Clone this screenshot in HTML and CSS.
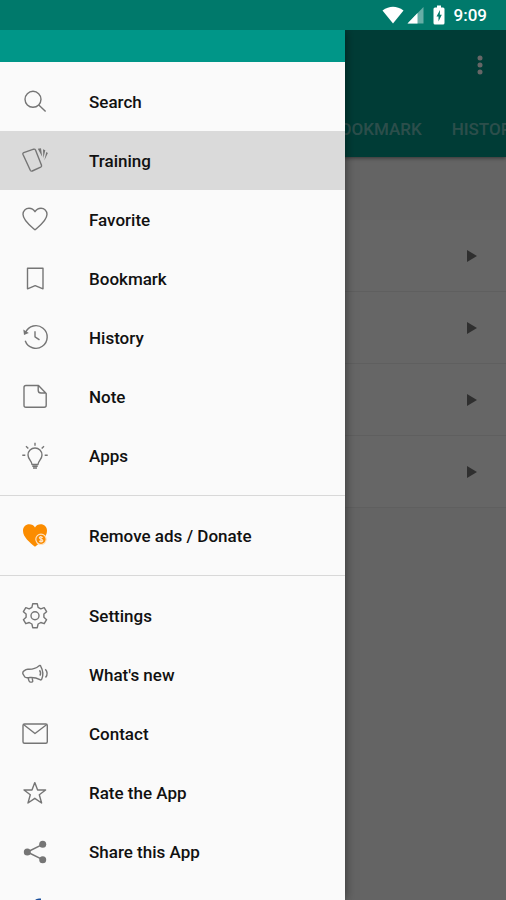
FILE: index.html
```html
<!DOCTYPE html>
<html lang="en">
<head>
<meta charset="utf-8">
<meta name="viewport" content="width=device-width, initial-scale=1">
<title>Menu</title>
<link rel="stylesheet" href="styles.css">
</head>
<body>
<div class="screen">
  <header class="status">
    <svg class="wifi" viewBox="0 0 22 18"><path d="M11 17.500 0.500 4.500Q11-3 21.500 4.500Z"/></svg>
    <svg class="signal" viewBox="0 0 17 18"><path class="faint" d="M16.500 1V17.500H.5Z"/><path d="M10.500 7V17.500H.5Z"/></svg>
    <svg class="battery" viewBox="0 0 12 20"><path d="M4 .5h4v2h2q1.500 0 1.500 1.500v14q0 1.500-1.500 1.500H2Q.5 19.500.5 18V4Q.5 2.500 2 2.500h2Z"/><path class="bolt" d="M7 5 3.500 11.500H5.500V16.500L8.800 9.800H6.800Z"/></svg>
    <span class="clock">9:09</span>
  </header>

  <div class="stage">
    <main class="page">
      <div class="appbar">
        <div class="toolbar">
          <button class="more" aria-label="More options"><svg viewBox="0 0 6 20"><circle cx="3" cy="3" r="2.500"/><circle cx="3" cy="10" r="2.500"/><circle cx="3" cy="17" r="2.500"/></svg></button>
        </div>
        <nav class="tabs"><a href="#bookmark">BOOKMARK</a><a href="#history">HISTORY</a></nav>
      </div>
      <div class="section"></div>
      <ul class="list">
        <li><svg viewBox="0 0 10 12"><path d="M0 0 10 6 0 12Z"/></svg></li>
        <li><svg viewBox="0 0 10 12"><path d="M0 0 10 6 0 12Z"/></svg></li>
        <li><svg viewBox="0 0 10 12"><path d="M0 0 10 6 0 12Z"/></svg></li>
        <li><svg viewBox="0 0 10 12"><path d="M0 0 10 6 0 12Z"/></svg></li>
      </ul>
    </main>
    <div class="scrim"></div>

    <aside class="drawer">
      <div class="drawer-head"></div>
      <nav class="menu">
        <div class="group">
          <a class="item" href="#search"><svg viewBox="0 0 29 29"><circle cx="12" cy="12.300" r="8"/><path d="M17.800 18 24.600 24.600"/></svg>Search</a>
          <a class="item active" href="#training"><svg viewBox="0 0 29 29"><path d="M2.700 6.600 12.700 3.200Q14 2.900 14.500 4L20.500 19.200Q20.900 20.500 19.700 21.200L11.200 25Q9.900 25.400 9.300 24.200L1.900 8.300Q1.500 7.100 2.700 6.600Z"/><path class="solid" d="M16.800 2.800 20 2.300 21.200 10.800ZM22 3.300 24.300 4.200 22.300 12.300ZM25.300 6 26.900 6.900 23.300 14.500Z"/></svg>Training</a>
          <a class="item" href="#favorite"><svg viewBox="0 0 29 29"><path d="M14 24.800C10 21.300 2 15.700 2 9.300 2 5.700 4.700 3.200 8 3.200c2.600 0 4.700 1.300 6 3.500 1.300-2.200 3.400-3.500 6-3.500 3.300 0 6 2.500 6 6.100 0 6.400-8 12-12 15.500Z"/></svg>Favorite</a>
          <a class="item" href="#bookmark"><svg viewBox="0 0 29 29"><path d="M6.500 4.300h15.500v20.500l-7.800-3.200-7.700 3.200Z"/></svg>Bookmark</a>
          <a class="item" href="#history"><svg viewBox="0 0 29 29"><path d="M4.500 9.500A11.300 11.300 0 1 1 4.200 17.700M14 8.300v5.500l4.500 3"/><path class="solid" d="M2.300 6.500 3 12 7.800 10Z"/></svg>History</a>
          <a class="item" href="#note"><svg viewBox="0 0 29 29"><path d="M5 3.500h12.500l7.700 8V23.200q0 2-2 2H5q-2 0-2-2V5.500q0-2 2-2ZM17.200 3.700v4.500q0 2.800 2.800 2.800h5"/></svg>Note</a>
          <a class="item" href="#apps"><svg viewBox="0 0 29 29"><path d="M11 23.500c0-3.500-4-5-4-9.500a7 7 0 0 1 14 0c0 4.500-4 6-4 9.500ZM11.300 25.200h5.400M12 27h4M14 1.700v3M5 5.200l2.300 2.300M23 5.200l-2.300 2.300M1.300 14.300h3M23.700 14.300h3"/></svg>Apps</a>
        </div>
        <div class="group">
          <a class="item" href="#donate"><svg viewBox="0 0 29 29"><path class="heart" d="M14 25.800C9 21.500 2 16.300 2 9.700 2 6 4.800 3.300 8.300 3.300c2.400 0 4.500 1.200 5.700 3.100 1.200-1.900 3.300-3.100 5.700-3.100 3.500 0 6.300 2.700 6.300 6.400 0 6.600-7 11.800-12 16.100Z"/><circle class="coin" cx="20" cy="18.300" r="5.200"/><path class="mark" d="M21.800 16.500q-3.400-1.500-3.400.2c0 1.600 3.400 1.300 3.400 3q0 1.600-3.600.4M20 15v6.600"/></svg>Remove ads / Donate</a>
        </div>
        <div class="group">
          <a class="item" href="#settings"><svg viewBox="0 0 29 29"><path d="M11.700 2.800h4.600l.8 3.600 2.700 1.500 3.400-1.200 2.400 4-2.700 2.400v3.200l2.700 2.400-2.400 4-3.400-1.200-2.700 1.500-.8 3.700h-4.600l-.8-3.700-2.700-1.500-3.400 1.200-2.400-4 2.700-2.400v-3.200l-2.700-2.400 2.400-4 3.400 1.200 2.700-1.500Z"/><circle cx="14" cy="14.700" r="4"/></svg>Settings</a>
          <a class="item" href="#news"><svg viewBox="0 0 29 29"><path d="M3.800 17 1.800 13.700Q1.400 12 3 10.900l2-1.200q1-.5 2.200-.4c5 .2 8-1 10.600-3.300.8-.7 1.600-.7 2 .3q3.500 6.500 1 12.700-.5 1.400-1.800.7Q14.500 17.200 9 17.500q-3 .8-5.200-.5ZM7 17.700l1 3.200q.4 1.400 1.800 1.200h1q1.200-.2.9-1.400l-.7-3M18.500 10.200q2 2.600.4 5.500M24.300 9.300q3.600 4.200.2 8.200"/></svg>What's new</a>
          <a class="item" href="#contact"><svg viewBox="0 0 29 29"><rect x="2" y="5" width="24.300" height="19.300" rx="1.500"/><path d="M2.500 5.500 14 14.500 25.800 5.500"/></svg>Contact</a>
          <a class="item" href="#rate"><svg viewBox="0 0 29 29"><path d="M13.800 4.600 16.600 12H24.600L18.300 16.800 20.600 25 13.800 20.300 7 25 9.300 16.800 3 12H11Z"/></svg>Rate the App</a>
          <a class="item" href="#share"><svg viewBox="0 0 29 29"><path d="M21.700 7.300 6.300 15 21.700 22.700"/><g class="solid"><circle cx="6.300" cy="15" r="3.500"/><circle cx="21.700" cy="7.300" r="3.500"/><circle cx="21.700" cy="22.700" r="3.500"/></g></svg>Share this App</a>
          <a class="item" href="#facebook" aria-label="Facebook"><svg viewBox="0 0 29 29"><path class="fb" d="M20 4.500h-2q-3 0-3 3V26M10 13.500h9.500"/></svg></a>
        </div>
      </nav>
    </aside>
  </div>
</div>
</body>
</html>
```
FILE: styles.css
```css
* {
  box-sizing: border-box;
}

body {
  margin: 0;
  font-family: Roboto, "Liberation Sans", sans-serif;
  font-weight: 500;
  color: #111;
  background: #fafafa;
}

a {
  color: inherit;
  text-decoration: none;
}

.screen {
  display: flex;
  flex-direction: column;
  height: 100vh;
  overflow: hidden;
}

.status {
  display: flex;
  flex: none;
  align-items: center;
  justify-content: flex-end;
  height: 30px;
  padding-right: 19px;
  background: #00796b;
  color: #fff;
  font-size: 17px;
}

.status svg {
  fill: #fff;
}

.wifi {
  width: 22px;
  height: 18px;
  margin-right: 3px;
}

.signal {
  width: 17px;
  height: 18px;
  margin-right: 9px;
}

.signal .faint {
  opacity: 0.4;
}

.battery {
  width: 12px;
  height: 20px;
  margin-right: 9px;
}

.battery .bolt {
  fill: #00796b;
}

.stage {
  position: relative;
  flex: 1;
  min-height: 0;
  overflow: hidden;
}

.appbar {
  position: relative;
  background: #009688;
  box-shadow: 0 1px 4px rgba(0, 0, 0, 0.5);
}

.toolbar {
  display: flex;
  align-items: center;
  justify-content: flex-end;
  height: 70px;
  padding-right: 23px;
}

.more {
  display: flex;
  padding: 0;
  border: 0;
  background: none;
}

.more svg {
  width: 6px;
  height: 20px;
  fill: #fff;
}

.tabs {
  display: flex;
  height: 57px;
  padding-left: 314px;
  overflow: hidden;
  font-size: 17px;
  line-height: 58px;
  color: rgba(255, 255, 255, 0.45);
}

.tabs a {
  flex: none;
  padding: 0 15px;
}

.section {
  height: 63px;
}

.list {
  margin: 0;
  padding: 0;
  list-style: none;
  background: #fff;
}

.list li {
  display: flex;
  align-items: center;
  justify-content: flex-end;
  height: 72px;
  padding-right: 29px;
  border-bottom: 1px solid #eee;
}

.list svg {
  width: 10px;
  height: 12px;
  fill: #757575;
}

.scrim {
  position: absolute;
  inset: 0;
  background: rgba(0, 0, 0, 0.6);
}

.drawer {
  position: absolute;
  top: 0;
  bottom: 0;
  left: 0;
  width: 345px;
  max-width: 85%;
  overflow: hidden;
  background: #fafafa;
  box-shadow: 0 0 10px rgba(0, 0, 0, 0.5);
}

.drawer-head {
  height: 32px;
  background: #009688;
}

.group {
  padding: 10px 0;
}

.group + .group {
  border-top: 1px solid #d8d8d8;
}

.item {
  display: flex;
  align-items: center;
  gap: 39px;
  height: 59px;
  padding-left: 21px;
  font-size: 17px;
}

.item.active {
  background: #dadada;
}

.item svg {
  width: 29px;
  height: 29px;
  fill: none;
  stroke: #757575;
  stroke-width: 1.4;
  stroke-linejoin: round;
}

.item .solid {
  fill: #757575;
  stroke: none;
}

.item .heart {
  fill: #fb8c00;
  stroke: none;
}

.item .coin {
  fill: #fb8c00;
  stroke: #fde3c4;
  stroke-width: 1.2;
}

.item .mark {
  stroke: #fde3c4;
  stroke-width: 1.2;
}

.item .fb {
  stroke: #1a4f9c;
  stroke-width: 4;
}
```
